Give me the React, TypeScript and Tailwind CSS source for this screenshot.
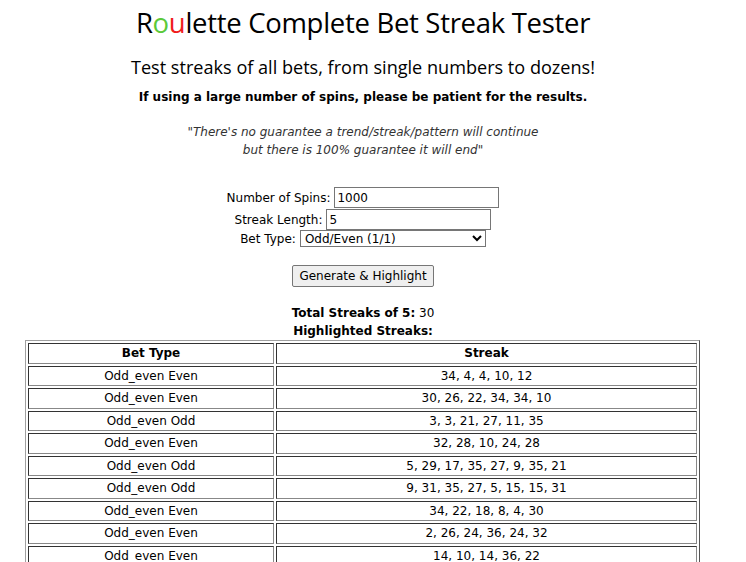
import { useState } from "react";

const rows: [string, string][] = [
  ["Odd_even Even", "34, 4, 4, 10, 12"],
  ["Odd_even Even", "30, 26, 22, 34, 34, 10"],
  ["Odd_even Odd", "3, 3, 21, 27, 11, 35"],
  ["Odd_even Even", "32, 28, 10, 24, 28"],
  ["Odd_even Odd", "5, 29, 17, 35, 27, 9, 35, 21"],
  ["Odd_even Odd", "9, 31, 35, 27, 5, 15, 15, 31"],
  ["Odd_even Even", "34, 22, 18, 8, 4, 30"],
  ["Odd_even Even", "2, 26, 24, 36, 24, 32"],
  ["Odd_even Even", "14, 10, 14, 36, 22"],
  ["Odd_even Odd", "7, 13, 1, 29, 33"],
  ["Odd_even Even", "16, 8, 20, 2, 12, 6"],
];

const cell =
  "h-[20.5px] p-0 leading-[16px] text-center align-middle border border-t-[#333] border-l-[#333] border-r-[#888] border-b-[#888]";

export default function App() {
  const [spins, setSpins] = useState("1000");
  const [length, setLength] = useState("5");
  const [bet, setBet] = useState("odd_even");

  return (
    <div className="w-[726px] bg-white text-black text-center font-['DejaVu_Sans',Verdana,sans-serif] text-[12px] pb-8">
      <h1 className="h-[46px] leading-[46px] text-[27.5px] font-normal font-['Open_Sans','Noto_Sans',sans-serif] tracking-[-0.3px]">
        R<span className="text-[#5cc93a]">o</span>
        <span className="text-[#f01c1c]">u</span>lette Complete Bet Streak Tester
      </h1>
      <h2 className="mt-[9px] leading-[24px] text-[18.1px] font-normal font-['Open_Sans','Noto_Sans',sans-serif]">
        Test streaks of all bets, from single numbers to dozens!
      </h2>
      <p className="mt-[9px] leading-[18px] font-bold">
        If using a large number of spins, please be patient for the results.
      </p>
      <p className="mt-[17px] leading-[18px] italic text-[#333]">
        "There's no guarantee a trend/streak/pattern will continue
        <br />
        but there is 100% guarantee it will end"
      </p>

      {/* Form */}
      <div className="mt-[28px] flex flex-col items-center leading-[16px]">
        <div className="flex items-center h-[21px]">
          <span>Number of Spins:</span>
          <input
            value={spins}
            onChange={(e) => setSpins(e.target.value)}
            className="ml-[4px] w-[165px] h-[21px] px-[2px] border border-[#767676] text-[12px] outline-none"
          />
        </div>
        <div className="flex items-center h-[21px] mt-[1px]">
          <span>Streak Length:</span>
          <input
            value={length}
            onChange={(e) => setLength(e.target.value)}
            className="ml-[4px] w-[165px] h-[21px] px-[2px] border border-[#767676] text-[12px] outline-none"
          />
        </div>
        <div className="flex items-center h-[17px]">
          <span>Bet Type:</span>
          <select
            value={bet}
            onChange={(e) => setBet(e.target.value)}
            className="ml-[4px] w-[186px] h-[17px] border border-[#767676] text-[12px] leading-[15px] bg-white"
          >
            <option value="odd_even">Odd/Even (1/1)</option>
            <option value="red_black">Red/Black (1/1)</option>
            <option value="high_low">High/Low (1/1)</option>
            <option value="dozens">Dozens (2/1)</option>
            <option value="columns">Columns (2/1)</option>
            <option value="single">Single Numbers (35/1)</option>
          </select>
        </div>
        <button className="mt-[18px] h-[22px] px-[6px] bg-[#efefef] border border-[#767676] rounded-[2px] text-[12px]">
          Generate &amp; Highlight
        </button>
      </div>

      <p className="mt-[17px] leading-[18px]">
        <b>Total Streaks of 5:</b> 30
      </p>
      <p className="leading-[18px] font-bold">Highlighted Streaks:</p>

      <table className="ml-[25px] w-[675px] border-separate border-spacing-[2px] border border-t-[#a0a0a0] border-l-[#a0a0a0] border-r-[#555] border-b-[#555]">
        <thead>
          <tr>
            <th className={`${cell} w-[246px] font-bold`}>Bet Type</th>
            <th className={`${cell} font-bold`}>Streak</th>
          </tr>
        </thead>
        <tbody>
          {rows.map(([type, streak], i) => (
            <tr key={i}>
              <td className={cell}>{type}</td>
              <td className={cell}>{streak}</td>
            </tr>
          ))}
        </tbody>
      </table>
    </div>
  );
}
